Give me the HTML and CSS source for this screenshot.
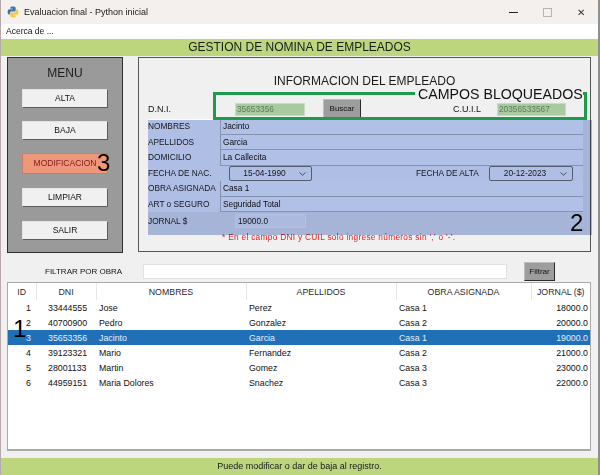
FILE: index.html
```html
<!DOCTYPE html>
<html lang="es">
<head>
<meta charset="utf-8">
<title>Evaluacion final - Python inicial</title>
<link rel="stylesheet" href="styles.css">
</head>
<body>
<div class="window">
  <div class="titlebar">
    <svg class="pyicon" width="12" height="12" viewBox="0 0 12 12">
      <path d="M5.9 0.5c-2.6 0-2.5 1.1-2.5 1.1v1.2h2.6v.4H2.4S.6 3 .6 5.8s1.5 2.7 1.5 2.7h1v-1.4s-.1-1.5 1.5-1.5h2.6s1.5 0 1.5-1.4V1.9S8.9.5 5.9.5z" fill="#3b74ad"/>
      <path d="M6.1 11.5c2.6 0 2.5-1.1 2.5-1.1V9.2H6v-.4h3.6s1.8.2 1.8-2.6-1.5-2.7-1.5-2.7h-1v1.4s.1 1.5-1.5 1.5H4.8s-1.5 0-1.5 1.4v2.3s-.2 1.4 2.8 1.4z" fill="#f6c83f"/>
    </svg>
    <span class="title">Evaluacion final - Python inicial</span>
    <div class="controls">
      <span class="ctl"><span class="min"></span></span>
      <span class="ctl"><span class="max"></span></span>
      <span class="ctl close">✕</span>
    </div>
  </div>
  <div class="menubar">Acerca de ...</div>
  <div class="header">GESTION DE NOMINA DE EMPLEADOS</div>

  <div class="main">
    <div class="menu-panel">
      <div class="menu-title">MENU</div>
      <div class="mbtn">ALTA</div>
      <div class="mbtn">BAJA</div>
      <div class="mbtn active">MODIFICACION</div>
      <div class="mbtn gap14">LIMPIAR</div>
      <div class="mbtn gap14">SALIR</div>
      <span class="anno anno3">3</span>
    </div>

    <div class="info-panel">
      <div class="info-title">INFORMACION DEL EMPLEADO</div>
      <div class="id-row">
        <span class="lbl dni-lbl">D.N.I.</span>
        <span class="locked dni-entry">35653356</span>
        <span class="gbtn buscar">Buscar</span>
        <span class="lbl cuil-lbl">C.U.I.L</span>
        <span class="locked cuil-entry">20356533567</span>
      </div>
      <div class="form">
        <div class="frow"><span class="flbl">NOMBRES</span><span class="fentry">Jacinto</span></div>
        <div class="frow"><span class="flbl">APELLIDOS</span><span class="fentry">Garcia</span></div>
        <div class="frow"><span class="flbl">DOMICILIO</span><span class="fentry">La Callecita</span></div>
        <div class="frow">
          <span class="flbl nac-lbl">FECHA DE NAC.</span>
          <span class="combo nac">15-04-1990<svg class="chev" width="7" height="4" viewBox="0 0 7 4"><path d="M0.5 0.5L3.5 3.2L6.5 0.5" fill="none" stroke="#555" stroke-width="0.9"/></svg></span>
          <span class="flbl alta-lbl">FECHA DE ALTA</span>
          <span class="combo alta">20-12-2023<svg class="chev" width="7" height="4" viewBox="0 0 7 4"><path d="M0.5 0.5L3.5 3.2L6.5 0.5" fill="none" stroke="#555" stroke-width="0.9"/></svg></span>
        </div>
        <div class="frow"><span class="flbl">OBRA ASIGNADA</span><span class="fentry">Casa 1</span></div>
        <div class="frow"><span class="flbl">ART o SEGURO</span><span class="fentry">Seguridad Total</span></div>
      </div>
      <div class="jornal-row">
        <span class="flbl jlbl">JORNAL $</span>
        <span class="jentry">19000.0</span>
      </div>
      <div class="note">* En el campo DNI y CUIL solo ingrese números sin ',' o '-'.</div>

      <div class="green-box"></div>
      <div class="green-label">CAMPOS BLOQUEADOS</div>
      <div class="blue-overlay"></div>
      <span class="anno anno2">2</span>
    </div>
  </div>

  <div class="filter-row">
    <span class="filter-lbl">FILTRAR POR OBRA</span>
    <span class="filter-entry"></span>
    <span class="gbtn filtrar">Filtrar</span>
  </div>

  <div class="table-wrap">
    <table class="grid">
      <colgroup>
        <col class="c-id"><col class="c-dni"><col class="c-nom"><col class="c-ape"><col class="c-obra"><col class="c-jor">
      </colgroup>
      <thead>
        <tr><th>ID</th><th>DNI</th><th>NOMBRES</th><th>APELLIDOS</th><th>OBRA ASIGNADA</th><th>JORNAL ($)</th></tr>
      </thead>
      <tbody>
        <tr><td class="r">1</td><td class="dni">33444555</td><td>Jose</td><td>Perez</td><td>Casa 1</td><td class="r">18000.0</td></tr>
        <tr><td class="r">2</td><td class="dni">40700900</td><td>Pedro</td><td>Gonzalez</td><td>Casa 2</td><td class="r">20000.0</td></tr>
        <tr class="sel"><td class="r">3</td><td class="dni">35653356</td><td>Jacinto</td><td>Garcia</td><td>Casa 1</td><td class="r">19000.0</td></tr>
        <tr><td class="r">4</td><td class="dni">39123321</td><td>Mario</td><td>Fernandez</td><td>Casa 2</td><td class="r">21000.0</td></tr>
        <tr><td class="r">5</td><td class="dni">28001133</td><td>Martin</td><td>Gomez</td><td>Casa 3</td><td class="r">23000.0</td></tr>
        <tr><td class="r">6</td><td class="dni">44959151</td><td>Maria Dolores</td><td>Snachez</td><td>Casa 3</td><td class="r">22000.0</td></tr>
      </tbody>
    </table>
    <span class="anno anno1">1</span>
  </div>

  <div class="status">Puede modificar o dar de baja al registro.</div>
</div>
</body>
</html>
```

FILE: styles.css
```css
* { box-sizing: border-box; margin: 0; padding: 0; }
html, body { width: 600px; height: 475px; overflow: hidden; }
body {
  background: #f0f0f0;
  font-family: "Liberation Sans", Arial, sans-serif;
  color: #000;
}
.window {
  width: 600px;
  height: 475px;
  display: flex;
  flex-direction: column;
  border-right: 2px solid #8f8f8f;
  border-left: 1px solid #b7a9a9;
}

/* title bar */
.titlebar {
  height: 24px;
  background: #f3f0ed;
  display: flex;
  align-items: center;
}
.pyicon { margin-left: 6px; margin-right: 5px; flex: none; }
.title { font-size: 9px; color: #1a1a1a; }
.controls { margin-left: auto; display: flex; height: 24px; }
.ctl {
  width: 34px;
  height: 24px;
  display: flex;
  align-items: center;
  justify-content: center;
}
.min { width: 9px; height: 1px; background: #222; }
.max { width: 9px; height: 9px; border: 1px solid #b5b5b5; }
.close { font-size: 10px; color: #333; }

.menubar {
  height: 15px;
  background: #fff;
  font-size: 8.5px;
  line-height: 15px;
  padding-left: 5px;
  color: #111;
}
.header {
  height: 17px;
  background: #bcd67e;
  font-size: 12px;
  line-height: 17px;
  text-align: center;
  color: #1b1b1b;
}

/* main */
.main {
  display: flex;
  padding: 1px 0 0 6px;
  gap: 15px;
}
.menu-panel {
  position: relative;
  width: 116px;
  height: 196px;
  background: #9a9a9a;
  border: 1px solid #2f2f2f;
  display: flex;
  flex-direction: column;
  align-items: center;
}
.menu-title {
  margin-top: 8px;
  font-size: 12px;
  line-height: 15px;
  color: #1c1c1c;
}
.mbtn {
  width: 86px;
  height: 19px;
  margin-top: 13px;
  background: #f0f0f0;
  border: 1px solid #e4e4e4;
  border-right-color: #5c5c5c;
  border-bottom-color: #5c5c5c;
  font-size: 8.5px;
  line-height: 17px;
  text-align: center;
  color: #101010;
}
.menu-title + .mbtn { margin-top: 8px; }
.mbtn.active {
  height: 21px;
  line-height: 19px;
  background: #ee977a;
  border: 1px solid #cd7b62;
  color: #7d1c1c;
}
.mbtn.gap14 { margin-top: 14px; }

.anno {
  position: absolute;
  font-family: "Liberation Sans", Arial, sans-serif;
  font-size: 24px;
  line-height: 24px;
  color: #000;
}
.anno3 { left: 89px; top: 93px; }

/* info panel */
.info-panel {
  position: relative;
  width: 453px;
  height: 195px;
  border: 1px solid #555;
  background: #f0f0f0;
}
.info-title {
  margin-top: 16px;
  font-size: 12px;
  line-height: 15px;
  text-align: center;
  color: #1a1a1a;
}
.id-row {
  margin-top: 10px;
  height: 20px;
  display: flex;
  align-items: center;
  padding-left: 9px;
}
.lbl { font-size: 9px; color: #111; white-space: nowrap; }
.dni-lbl { width: 87px; }
.locked {
  height: 13px;
  background: #a9c99f;
  border: 1px solid #c8dcc2;
  font-size: 8.3px;
  line-height: 11px;
  padding-left: 1px;
  color: #5d7d5b;
}
.dni-entry { width: 70px; }
.gbtn {
  height: 20px;
  background: #9d9d9d;
  border: 1px solid #bdbdbd;
  border-right-color: #2a2a2a;
  border-bottom-color: #2a2a2a;
  font-size: 8px;
  line-height: 18px;
  text-align: center;
  color: #111;
}
.buscar { width: 38px; margin-left: 18px; }
.cuil-lbl { margin-left: 92px; width: 44px; }
.cuil-entry { width: 69px; }

.form {
  margin-left: 9px;
  width: 435px;
  background: #fdfdfd;
  display: grid;
  grid-auto-rows: 15.5px;
}
.frow { display: flex; align-items: stretch; }
.flbl {
  font-size: 8.3px;
  line-height: 15.5px;
  color: #222;
  width: 72px;
  flex: none;
  white-space: nowrap;
}
.fentry {
  flex: 1;
  background: #fff;
  border-left: 1px solid #c2c2c2;
  border-bottom: 1px solid #c2c2c2;
  font-size: 8.3px;
  line-height: 14px;
  padding-left: 2px;
  color: #111;
}
.nac-lbl { width: 81px; }
.combo {
  align-self: center;
  height: 15px;
  border: 1px solid #7a7a7a;
  border-radius: 2px;
  font-size: 8.3px;
  line-height: 13px;
  color: #222;
  position: relative;
  text-align: center;
  padding-right: 12px;
}
.combo.nac { width: 83px; }
.combo.alta { width: 84px; }
.chev { position: absolute; right: 5px; top: 5px; }
.alta-lbl { width: 73px; margin-left: 104px; }

.jornal-row {
  margin-top: 2px;
  height: 14px;
  display: flex;
  align-items: center;
  padding-left: 9px;
}
.jlbl { width: 87px; line-height: 14px; }
.jentry {
  width: 71px;
  height: 14px;
  background: #f8f8f8;
  border: 1px solid #fff;
  font-size: 8.3px;
  line-height: 12px;
  padding-left: 2px;
  color: #222;
}
.note {
  margin-top: 4px;
  margin-left: 83px;
  font-size: 8.3px;
  letter-spacing: 0.3px;
  line-height: 10px;
  color: #e8221f;
  white-space: nowrap;
}

.green-box {
  position: absolute;
  left: 74px;
  top: 34px;
  width: 374px;
  height: 28px;
  border: 3px solid #1f9a4c;
}
.green-label {
  position: absolute;
  left: 276px;
  top: 28px;
  padding-left: 3px;
  font-size: 14.2px;
  line-height: 16px;
  background: #f0f0f0;
  color: #111;
  white-space: nowrap;
}
.blue-overlay {
  position: absolute;
  left: 9px;
  top: 62px;
  width: 444px;
  height: 115px;
  background: #b1c0e6;
  mix-blend-mode: multiply;
}
.anno2 { left: 431px; top: 153px; }

/* filter */
.filter-row {
  margin-top: 8px;
  height: 20px;
  display: flex;
  align-items: center;
  padding-left: 44px;
}
.filter-lbl { font-size: 8px; color: #111; width: 98px; white-space: nowrap; }
.filter-entry {
  width: 364px;
  height: 15px;
  background: #fff;
  border: 1px solid #e2e2e2;
}
.filtrar { width: 31px; height: 19px; line-height: 17px; margin-left: 17px; }

/* table */
.table-wrap {
  position: relative;
  margin-top: 1px;
  margin-left: 6px;
  width: 584px;
  height: 169px;
  background: #fff;
  border: 1px solid #a9a9a9;
  border-bottom-width: 2px;
}
.grid {
  border-collapse: collapse;
  table-layout: fixed;
  width: 582px;
  font-size: 8.8px;
}
.c-id { width: 28px; }
.c-dni { width: 60px; }
.c-nom { width: 150px; }
.c-ape { width: 150px; }
.c-obra { width: 135px; }
.c-jor { width: 59px; }
.grid th {
  height: 17px;
  font-weight: normal;
  color: #2b2b2b;
  text-align: center;
  border-right: 1px solid #e6e6e6;
  padding: 0;
}
.grid th:last-child { border-right: none; }
.grid td {
  height: 15px;
  padding: 0 0 0 3px;
  white-space: nowrap;
  color: #111;
}
.grid td.r { text-align: right; padding: 0 5px 0 0; }
.grid td:last-child.r { padding-right: 2px; }
.grid td.dni { padding-left: 12px; }
.grid tr.sel td { background: #1f70b7; color: #e8eff8; }
.anno1 { left: 5px; top: 34px; }

.status {
  margin-top: auto;
  height: 17px;
  background: #bcd67e;
  font-size: 9px;
  line-height: 17px;
  text-align: center;
  color: #1a1a1a;
}
```
